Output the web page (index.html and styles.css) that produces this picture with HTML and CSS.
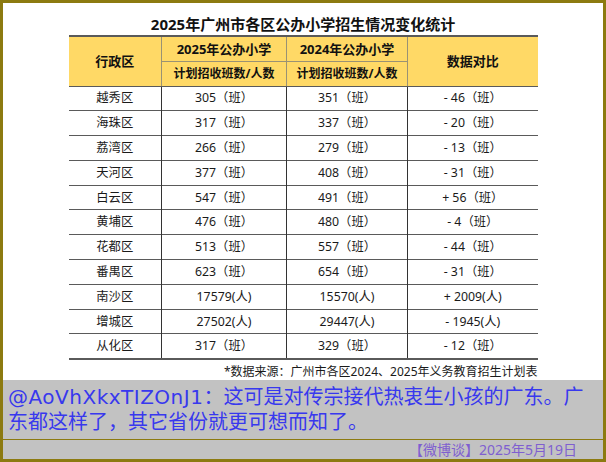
FILE: index.html
```html
<!DOCTYPE html>
<html lang="zh-CN">
<head>
<meta charset="utf-8">
<title>2025年广州市各区公办小学招生情况变化统计</title>
<link rel="stylesheet" href="styles.css">
</head>
<body>
<div class="frame">
  <section class="sheet">
    <h1 class="title">2025年广州市各区公办小学招生情况变化统计</h1>
    <table class="stats">
      <colgroup>
        <col class="c-area"><col class="c-y25"><col class="c-y24"><col class="c-diff">
      </colgroup>
      <thead>
        <tr class="h1">
          <th class="area" rowspan="2">行政区</th>
          <th class="year">2025年公办小学</th>
          <th class="year">2024年公办小学</th>
          <th class="diff" rowspan="2">数据对比</th>
        </tr>
        <tr class="h2">
          <th class="plan">计划招收班数/人数</th>
          <th class="plan">计划招收班数/人数</th>
        </tr>
      </thead>
      <tbody>
        <tr><td>越秀区</td><td>305（班）</td><td>351（班）</td><td>- 46（班）</td></tr>
        <tr><td>海珠区</td><td>317（班）</td><td>337（班）</td><td>- 20（班）</td></tr>
        <tr><td>荔湾区</td><td>266（班）</td><td>279（班）</td><td>- 13（班）</td></tr>
        <tr><td>天河区</td><td>377（班）</td><td>408（班）</td><td>- 31（班）</td></tr>
        <tr><td>白云区</td><td>547（班）</td><td>491（班）</td><td>+ 56（班）</td></tr>
        <tr><td>黄埔区</td><td>476（班）</td><td>480（班）</td><td>- 4（班）</td></tr>
        <tr><td>花都区</td><td>513（班）</td><td>557（班）</td><td>- 44（班）</td></tr>
        <tr><td>番禺区</td><td>623（班）</td><td>654（班）</td><td>- 31（班）</td></tr>
        <tr><td>南沙区</td><td>17579(人)</td><td>15570(人)</td><td>+ 2009(人)</td></tr>
        <tr><td>增城区</td><td>27502(人)</td><td>29447(人)</td><td>- 1945(人)</td></tr>
        <tr><td>从化区</td><td>317（班）</td><td>329（班）</td><td>- 12（班）</td></tr>
      </tbody>
    </table>
    <p class="note">*数据来源：广州市各区2024、2025年义务教育招生计划表</p>
  </section>
  <section class="comment">
    <p class="quote"><span class="user">@AoVhXkxTIZOnJ1</span>：这可是对传宗接代热衷生小孩的广东。广<br>东都这样了，其它省份就更可想而知了。</p>
    <p class="stamp">【微博谈】2025年5月19日</p>
  </section>
</div>
</body>
</html>
```

FILE: styles.css
```css
* { box-sizing: border-box; }

body {
  margin: 0;
}

.frame {
  width: 606px;
  height: 462px;
  border: 3px solid #8c7a10;
  background: #ffffff;
  display: flex;
  flex-direction: column;
}

.sheet {
  flex: 0 0 377px;
  background: #ffffff;
  padding-top: 10px;
  font-family: "Noto Sans", "Noto Sans CJK SC", sans-serif;
  color: #1a1a1a;
}

.title {
  margin: 0;
  font-size: 15px;
  line-height: 22px;
  font-weight: 700;
  text-align: center;
  color: #111111;
}

.stats {
  width: 469px;
  margin: 0 auto;
  border-collapse: collapse;
  table-layout: fixed;
  border-top: 2px solid #5a5a5a;
  border-bottom: 2px solid #5a5a5a;
}

.c-area { width: 93px; }
.c-y25 { width: 125px; }
.c-y24 { width: 121px; }
.c-diff { width: 130px; }

.stats th {
  background: #ffd966;
  color: #111111;
  font-weight: 700;
  font-size: 13px;
  padding: 0;
  border: 1px solid #9a9274;
  line-height: 18px;
}

.stats th.plan {
  font-size: 12px;
}

.stats th.area { border-left: none; }
.stats th.diff { border-right: none; }

.stats th.area,
.stats th.diff,
.stats th.plan {
  border-bottom: 1px solid #5a5a5a;
}

.stats .h1 { height: 25px; }
.stats .h2 { height: 25px; }

.stats td {
  padding: 0;
  height: 24.8px;
  font-size: 12.3px;
  line-height: 16px;
  text-align: center;
  color: #1a1a1a;
  border-top: 1px solid #5a5a5a;
  border-left: 1px solid #333333;
}

.stats td:first-child {
  border-left: none;
}

.note {
  width: 469px;
  margin: 4px auto 0;
  font-size: 12px;
  line-height: 16px;
  text-align: right;
  color: #1a1a1a;
}

.comment {
  flex: 1 1 auto;
  background: #c2c2c2;
  display: flex;
  flex-direction: column;
}

.quote {
  margin: 0;
  padding: 5px 4px 4px 5px;
  font-family: "DejaVu Sans", "Noto Sans CJK SC", sans-serif;
  font-size: 20px;
  line-height: 25px;
  color: #3838ee;
  white-space: nowrap;
  overflow: hidden;
  border-bottom: 1px solid #8c7a10;
}

.user {
  letter-spacing: 0.5px;
}

.stamp {
  margin: 0;
  flex: 1 1 auto;
  padding-right: 26px;
  font-family: "Noto Sans", "Noto Sans CJK SC", sans-serif;
  font-size: 14px;
  line-height: 19px;
  text-align: right;
  color: #7f5fd0;
}
```
